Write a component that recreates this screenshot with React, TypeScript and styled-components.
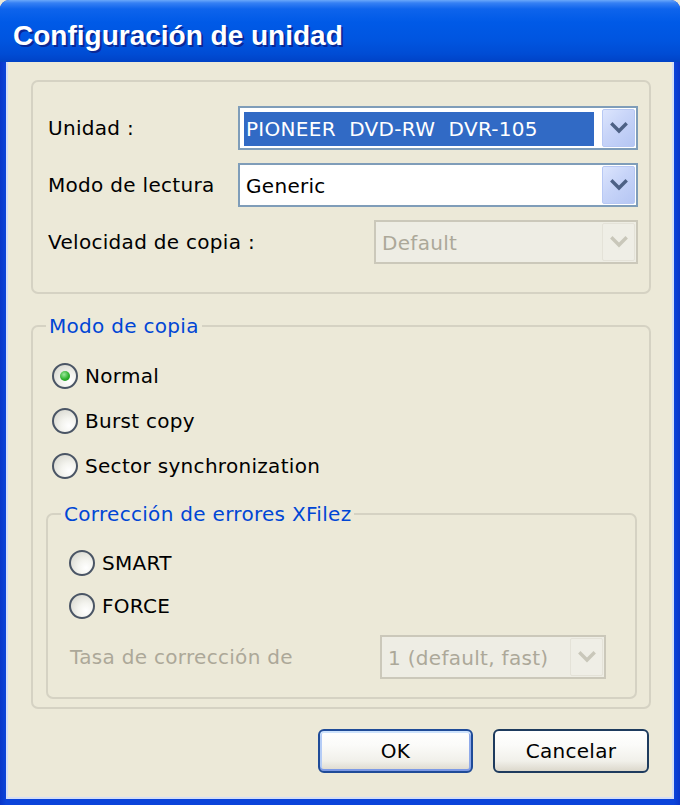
import React from "react";
import styled, { createGlobalStyle } from "styled-components";

const Global = createGlobalStyle`
  html, body { margin: 0; padding: 0; background: #ECE9D8; }
  body { width: 680px; height: 805px; overflow: hidden; }
  * { box-sizing: border-box; }
`;

const Window = styled.div`
  width: 680px;
  height: 805px;
  display: flex;
  flex-direction: column;
  background: #0B3CD2;
  border-radius: 9px 9px 0 0;
  overflow: hidden;
  font-family: "DejaVu Sans", "Liberation Sans", sans-serif;
  font-size: 20px;
  letter-spacing: 0.3px;
  color: #000;
`;

const TitleBar = styled.div`
  height: 62px;
  flex: none;
  padding: 20px 0 0 13px;
  background: linear-gradient(
    180deg,
    #6AA8FA 0px,
    #3580F4 3px,
    #0E64EC 9px,
    #005AE7 22px,
    #0055E0 40px,
    #004CD4 54px,
    #0042C6 62px
  );
`;

const Title = styled.div`
  font-family: "Liberation Sans", Arial, sans-serif;
  font-weight: bold;
  font-size: 28px;
  line-height: 32px;
  letter-spacing: 0;
  color: #ffffff;
  text-shadow: 2px 2px 0 #0A2896;
`;

const Frame = styled.div`
  flex: 1;
  display: flex;
  padding: 0 6px 6px 6px;
  background: linear-gradient(90deg, #0836C9 0px, #0B44DA 6px, #0B44DA 674px, #0836C9 680px);
`;

const Client = styled.div`
  flex: 1;
  display: flex;
  flex-direction: column;
  background: #ECE9D8;
  border: 2px solid #D4DEF6;
  border-top: 0;
  padding: 18px 21px 0 23px;
`;

const Panel = styled.div`
  border: 2px solid #D5D2C3;
  border-radius: 7px;
  padding: 24px 11px 28px 15px;
  display: grid;
  grid-template-columns: 190px 1fr;
  row-gap: 13px;
  align-items: center;
`;

const Label = styled.span<{ $disabled?: boolean }>`
  white-space: pre;
  line-height: 24px;
  color: ${(p) => (p.$disabled ? "#ACA899" : "#000")};
`;

const Combo = styled.div<{ $disabled?: boolean; $width?: number }>`
  height: 44px;
  width: ${(p) => (p.$width ? `${p.$width}px` : "100%")};
  justify-self: end;
  display: flex;
  align-items: stretch;
  border: 2px solid ${(p) => (p.$disabled ? "#CBC8BA" : "#7F9DB9")};
  background: ${(p) => (p.$disabled ? "#EEEDE4" : "#FFFFFF")};
  flex: none;
`;

const ComboText = styled.div<{ $selected?: boolean; $disabled?: boolean }>`
  flex: 1;
  display: flex;
  align-items: center;
  white-space: pre;
  margin: 4px 7px 2px 4px;
  padding-left: 2px;
  line-height: 24px;
  background: ${(p) => (p.$selected ? "#316AC5" : "transparent")};
  color: ${(p) => (p.$selected ? "#FFFFFF" : p.$disabled ? "#ACA899" : "#000")};
`;

const DropButton = styled.div<{ $disabled?: boolean }>`
  width: 33px;
  margin: 1px;
  flex: none;
  display: flex;
  align-items: center;
  justify-content: center;
  border-radius: 2px;
  border: 1px solid ${(p) => (p.$disabled ? "#E4E2D8" : "#B7C8F4")};
  background: ${(p) =>
    p.$disabled
      ? "#EFEEE6"
      : "linear-gradient(135deg, #DCE5FD 0%, #C7D4F8 45%, #B5C6F3 100%)"};
`;

const Chevron = ({ disabled }: { disabled?: boolean }) => (
  <svg width="18" height="12" viewBox="0 0 18 12">
    <path
      d="M2.5 2.5 L9 9 L15.5 2.5"
      fill="none"
      stroke={disabled ? "#C9C7BA" : "#4D6185"}
      strokeWidth="3.4"
      strokeLinecap="square"
    />
  </svg>
);

const Group = styled.fieldset<{ $pad: string; $mt: number; $ml?: number }>`
  margin: ${(p) => p.$mt}px 0 0 ${(p) => p.$ml ?? 0}px;
  min-width: 0;
  border: 2px solid #D5D2C3;
  border-radius: 7px;
  padding: ${(p) => p.$pad};
  display: flex;
  flex-direction: column;
`;

const Legend = styled.legend`
  margin-left: 13px;
  padding: 0 3px;
  color: #0046D5;
  font-size: 20px;
  line-height: 24px;
`;

const RadioList = styled.div<{ $indent: number; $gap: number }>`
  display: flex;
  flex-direction: column;
  gap: ${(p) => p.$gap}px;
  padding-left: ${(p) => p.$indent}px;
`;

const RadioRow = styled.label`
  display: flex;
  align-items: center;
  gap: 7px;
  height: 30px;
  line-height: 24px;
`;

const RadioCircle = styled.span<{ $checked?: boolean }>`
  width: 26px;
  height: 26px;
  flex: none;
  border-radius: 50%;
  border: 2px solid #4A5565;
  background: radial-gradient(circle at 68% 72%, #FFFFFF 0%, #F4F4EF 35%, #DCDCD4 80%, #CFCFC6 100%);
  display: flex;
  align-items: center;
  justify-content: center;
  &::after {
    content: "";
    width: 10px;
    height: 10px;
    border-radius: 50%;
    background: radial-gradient(circle at 40% 35%, #9BE89B 0%, #2DB02D 55%, #178A17 100%);
    display: ${(p) => (p.$checked ? "block" : "none")};
  }
`;

const RateRow = styled.div`
  display: flex;
  align-items: center;
  margin-top: 14px;
  padding-left: 22px;
`;

const RateLabel = styled(Label)`
  width: 310px;
  flex: none;
`;

const ButtonRow = styled.div`
  margin-top: 20px;
  display: flex;
  justify-content: flex-end;
  gap: 20px;
  padding-right: 2px;
`;

const Button = styled.button<{ $default?: boolean; $width: number }>`
  width: ${(p) => p.$width}px;
  height: 44px;
  font-family: "DejaVu Sans", "Liberation Sans", sans-serif;
  font-size: 20px;
  letter-spacing: 0.3px;
  color: #000;
  border-radius: 6px;
  border: 2px solid ${(p) => (p.$default ? "#1F4B98" : "#1E3B5E")};
  background: linear-gradient(180deg, #FFFFFF 0%, #FBFBF9 35%, #F1F0EA 75%, #DCD8CC 100%);
  box-shadow: ${(p) =>
    p.$default
      ? "inset 0 2px 0 #CEE3FC, inset 0 -2px 0 #7D9AE6, inset 2px 0 0 #B4CCF6, inset -2px 0 0 #8FAAEA"
      : "none"};
  padding: 0;
  cursor: default;
`;

export default function App() {
  return (
    <>
      <Global />
      <Window>
        <TitleBar>
          <Title>Configuración de unidad</Title>
        </TitleBar>
        <Frame>
          <Client>
            <Panel>
              <Label>Unidad :</Label>
              <Combo>
                <ComboText $selected>PIONEER  DVD-RW  DVR-105</ComboText>
                <DropButton>
                  <Chevron />
                </DropButton>
              </Combo>
              <Label>Modo de lectura</Label>
              <Combo>
                <ComboText>Generic</ComboText>
                <DropButton>
                  <Chevron />
                </DropButton>
              </Combo>
              <Label>Velocidad de copia :</Label>
              <Combo $disabled $width={264}>
                <ComboText $disabled>Default</ComboText>
                <DropButton $disabled>
                  <Chevron disabled />
                </DropButton>
              </Combo>
            </Panel>

            <Group $mt={20} $pad="23px 12px 8px 0">
              <Legend>Modo de copia</Legend>
              <RadioList $indent={19} $gap={15}>
                <RadioRow>
                  <RadioCircle $checked />
                  Normal
                </RadioRow>
                <RadioRow>
                  <RadioCircle />
                  Burst copy
                </RadioRow>
                <RadioRow>
                  <RadioCircle />
                  Sector synchronization
                </RadioRow>
              </RadioList>

              <Group $mt={21} $ml={13} $pad="22px 0 18px 0">
                <Legend>Corrección de errores XFilez</Legend>
                <RadioList $indent={21} $gap={13}>
                  <RadioRow>
                    <RadioCircle />
                    SMART
                  </RadioRow>
                  <RadioRow>
                    <RadioCircle />
                    FORCE
                  </RadioRow>
                </RadioList>
                <RateRow>
                  <RateLabel $disabled>Tasa de corrección de</RateLabel>
                  <Combo $disabled $width={226}>
                    <ComboText $disabled>1 (default, fast)</ComboText>
                    <DropButton $disabled>
                      <Chevron disabled />
                    </DropButton>
                  </Combo>
                </RateRow>
              </Group>
            </Group>

            <ButtonRow>
              <Button $default $width={155}>OK</Button>
              <Button $width={156}>Cancelar</Button>
            </ButtonRow>
          </Client>
        </Frame>
      </Window>
    </>
  );
}
